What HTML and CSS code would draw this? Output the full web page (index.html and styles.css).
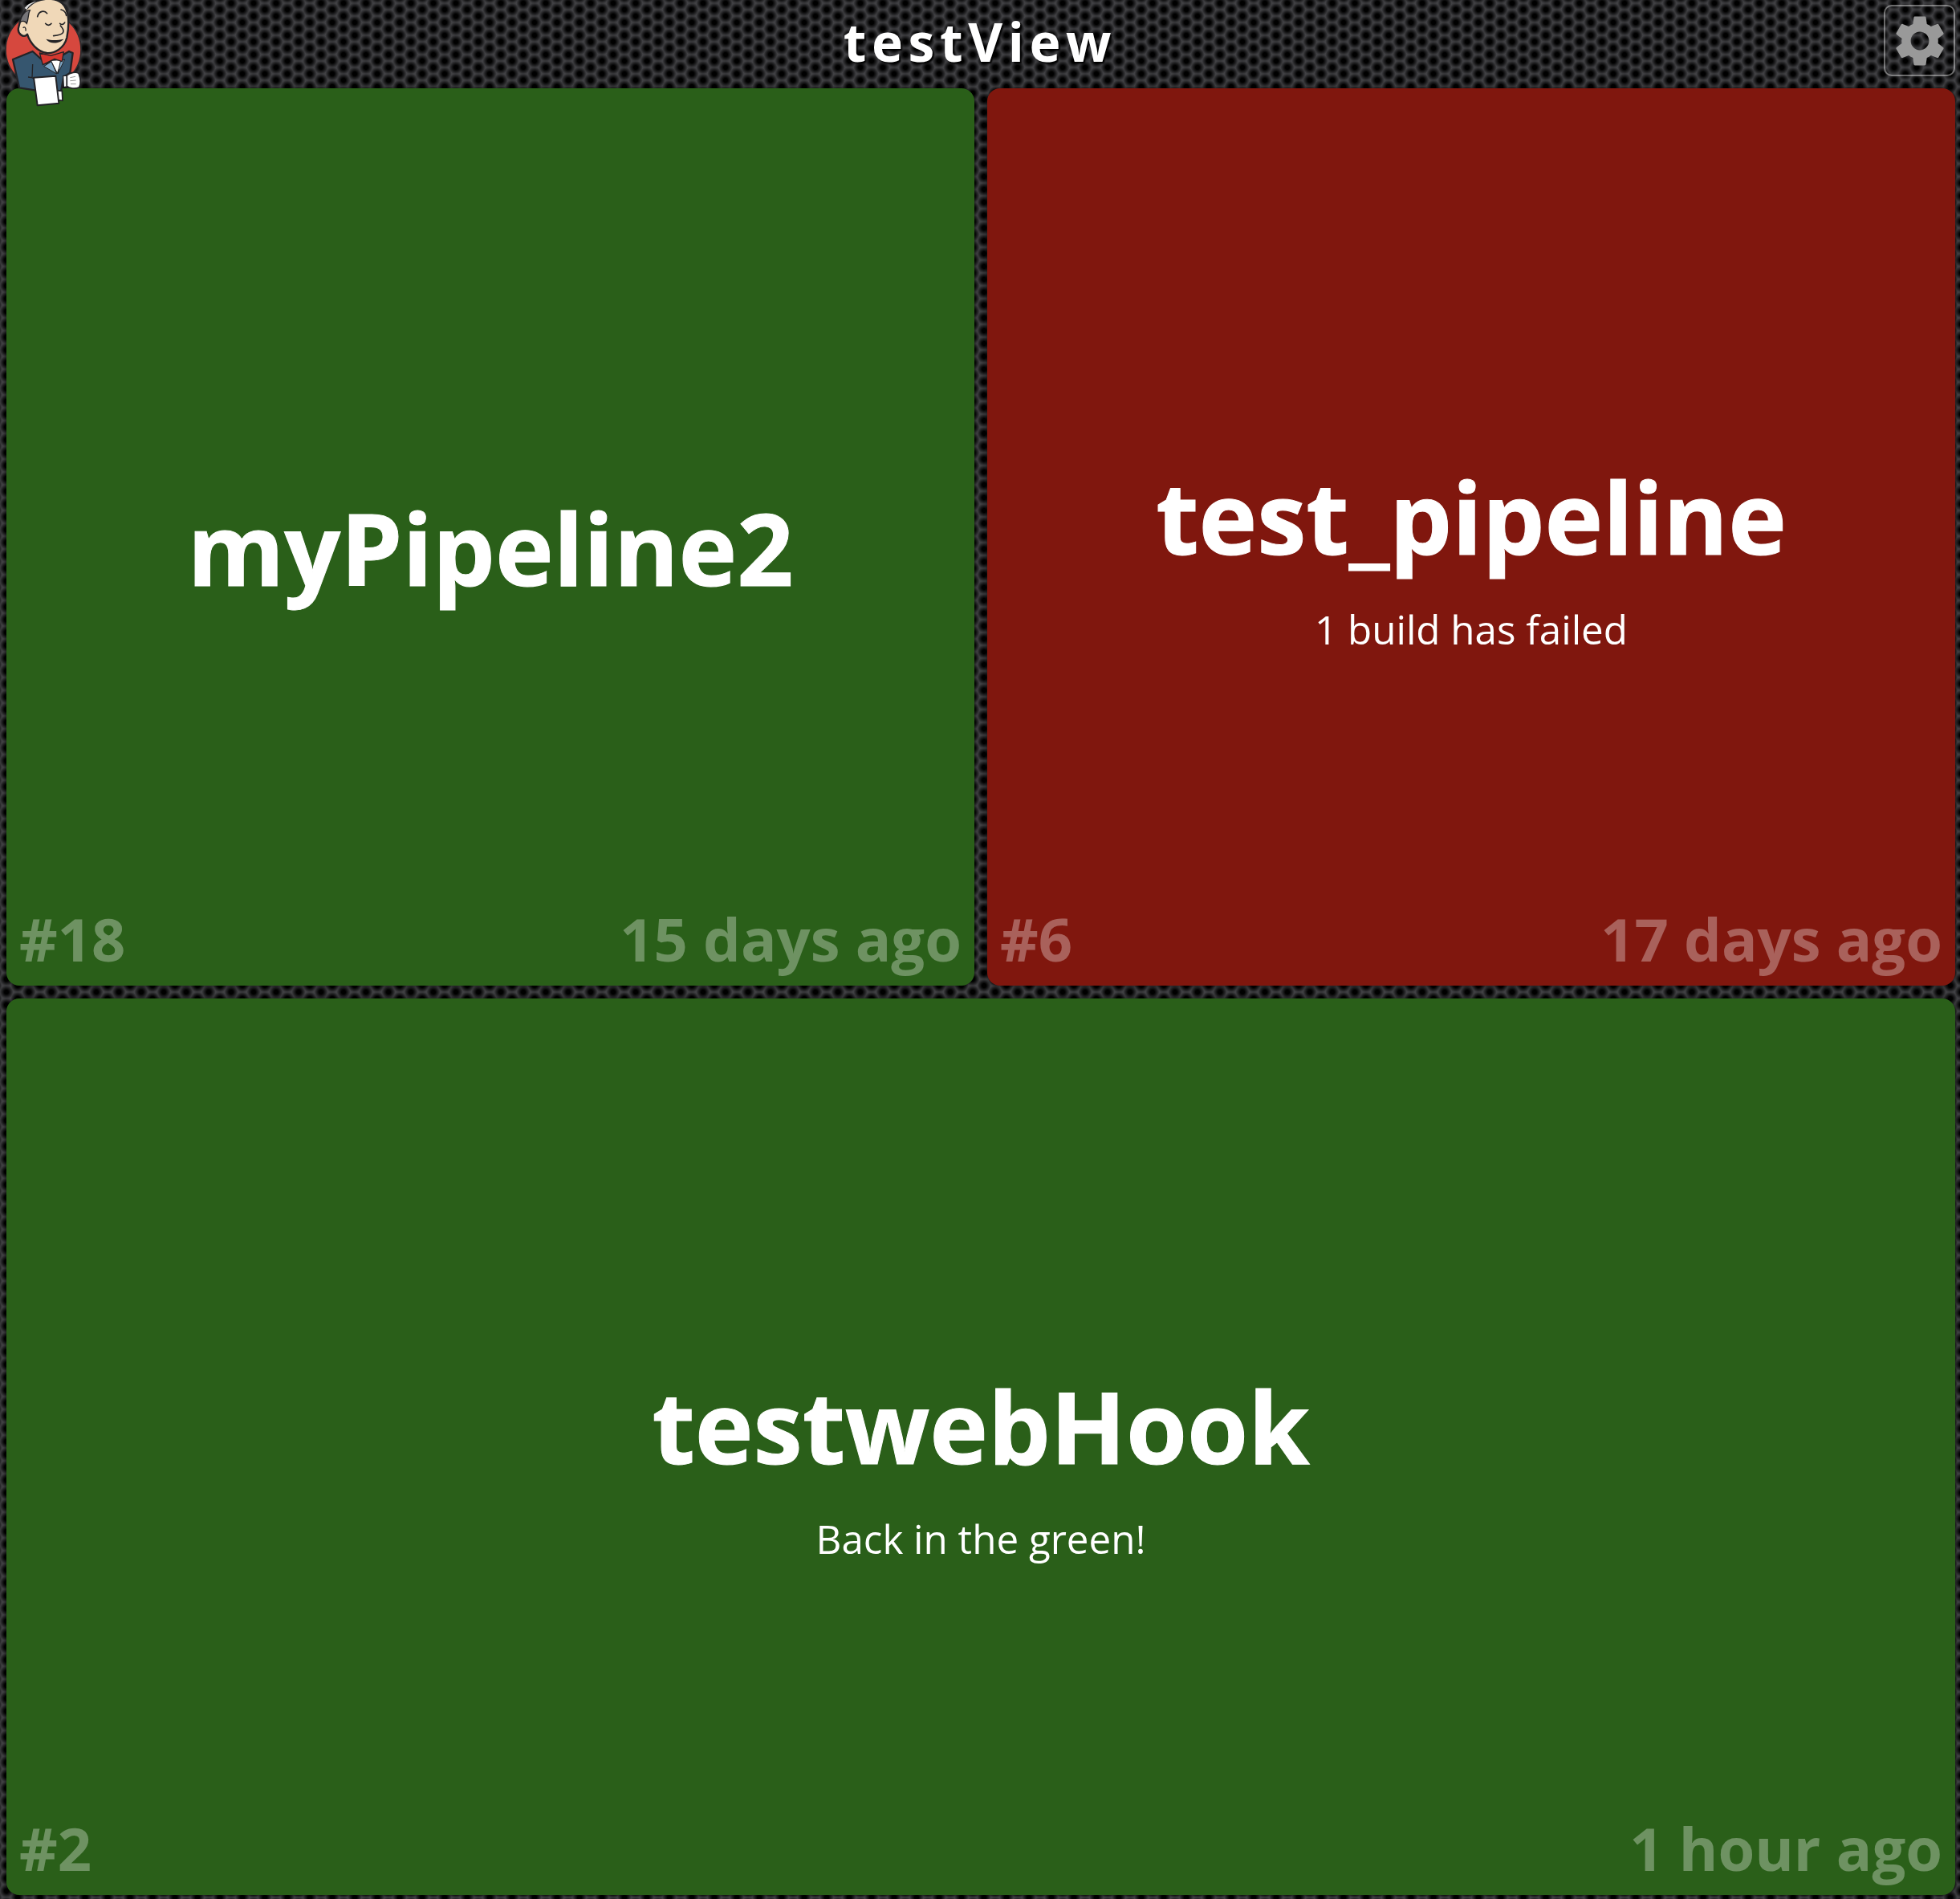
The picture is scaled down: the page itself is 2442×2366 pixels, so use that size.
FILE: index.html
```html
<!DOCTYPE html>
<html lang="en">
<head>
  <meta charset="UTF-8">
  <title>testView</title>
  <link rel="stylesheet" href="styles.css">
</head>
<body>
    <header class="topbar">
        <svg class="logo" viewBox="0 0 480 450" aria-hidden="true">
            <!-- red disc -->
            <circle cx="162" cy="186" r="141" fill="#d6483e" stroke="#2b2b2d" stroke-width="5"/>
            <!-- jacket -->
            <path d="M48 222 L122 192 L175 240 L258 192 L272 198 L262 272 L238 288 L226 352 L72 328 Z" fill="#36566f" stroke="#232326" stroke-width="7" stroke-linejoin="round"/>
            <path d="M122 240 L120 290 L105 288 M120 290 L128 296" fill="none" stroke="#232326" stroke-width="4"/>
            <!-- head -->
            <path d="M70 100 C76 70 88 40 110 22 C140 -6 200 -14 232 12 C262 38 258 100 250 140 C240 180 205 200 175 198 C140 194 112 160 102 128 C88 146 62 124 70 100 Z" fill="#f0d8b8" stroke="#232326" stroke-width="7" stroke-linejoin="round"/>
            <!-- hair -->
            <path d="M76 82 C78 58 96 38 112 38 C104 52 108 68 100 88 C94 78 84 78 76 82 Z" fill="#77767a" stroke="#232326" stroke-width="4"/>
            <path d="M92 30 C104 14 120 8 136 6 C118 14 106 22 100 36 Z" fill="#dcdcdc"/>
            <!-- face -->
            <path d="M140 62 C146 40 166 38 176 50" fill="none" stroke="#232326" stroke-width="5" stroke-linecap="round"/>
            <path d="M228 36 C238 38 246 46 248 58" fill="none" stroke="#232326" stroke-width="5" stroke-linecap="round"/>
            <path d="M170 88 C176 96 186 96 192 88" fill="none" stroke="#232326" stroke-width="5" stroke-linecap="round"/>
            <path d="M224 88 C230 94 238 92 242 84" fill="none" stroke="#232326" stroke-width="5" stroke-linecap="round"/>
            <path d="M226 96 C246 118 240 130 200 134" fill="none" stroke="#232326" stroke-width="5" stroke-linecap="round"/>
            <path d="M172 146 C190 170 226 160 238 146 C216 150 196 152 172 146 Z" fill="#232326"/>
            <path d="M86 104 C92 98 98 104 96 116" fill="none" stroke="#232326" stroke-width="4"/>
            <!-- shirt and lapels -->
            <path d="M190 226 L232 224 L214 274 Z" fill="#fff" stroke="#232326" stroke-width="3"/>
            <path d="M164 248 L192 230 L212 276 Z" fill="#7ea6c4" stroke="#232326" stroke-width="3"/>
            <path d="M226 228 L242 222 L216 276 Z" fill="#7ea6c4" stroke="#232326" stroke-width="3"/>
            <!-- bow tie -->
            <path d="M148 198 L190 208 L238 194 L232 230 L204 220 L160 242 Z" fill="#d6382f" stroke="#232326" stroke-width="4" stroke-linejoin="round"/>
            <!-- towel and glove -->
            <path d="M212 338 L232 340 L234 376 L214 374 Z" fill="#fff" stroke="#232326" stroke-width="5"/>
            <path d="M126 290 L208 284 L220 386 L140 394 Z" fill="#fff" stroke="#232326" stroke-width="6" stroke-linejoin="round"/>
            <path d="M236 284 L250 282 L250 324 L238 326 Z" fill="#fff" stroke="#232326" stroke-width="4"/>
            <path d="M250 282 C262 270 286 268 294 274 C302 296 302 316 296 326 C280 334 258 330 250 322 Z" fill="#fff" stroke="#232326" stroke-width="5" stroke-linejoin="round"/>
            <path d="M262 290 L282 286 M262 302 L284 300 M264 314 L284 314" fill="none" stroke="#9a9a9a" stroke-width="3"/>
        </svg>
        <h1 class="view-name">testView</h1>
        <a class="settings-btn" href="#" aria-label="Settings">
            <svg class="gear" viewBox="0 0 24 24" aria-hidden="true">
                <path d="M19.14 12.94c.04-.3.06-.61.06-.94 0-.32-.02-.64-.07-.94l2.03-1.58c.18-.14.23-.41.12-.61l-1.92-3.32c-.12-.22-.37-.29-.59-.22l-2.39.96c-.5-.38-1.03-.7-1.62-.94l-.36-2.54c-.04-.24-.24-.41-.48-.41h-3.84c-.24 0-.43.17-.47.41l-.36 2.54c-.59.24-1.13.57-1.62.94l-2.39-.96c-.22-.08-.47 0-.59.22L2.74 8.87c-.12.21-.08.47.12.61l2.03 1.58c-.05.3-.09.63-.09.94s.02.64.07.94l-2.03 1.58c-.18.14-.23.41-.12.61l1.92 3.32c.12.22.37.29.59.22l2.39-.96c.5.38 1.03.7 1.62.94l.36 2.54c.05.24.24.41.48.41h3.84c.24 0 .44-.17.47-.41l.36-2.54c.59-.24 1.13-.56 1.62-.94l2.39.96c.22.08.47 0 .59-.22l1.92-3.32c.12-.22.07-.47-.12-.61l-2.01-1.58zM12 15.6c-1.98 0-3.6-1.62-3.6-3.6s1.62-3.6 3.6-3.6 3.6 1.62 3.6 3.6-1.62 3.6-3.6 3.6z"/>
            </svg>
        </a>
    </header>

    <main class="jobs">
        <section class="job passing">
            <h2 class="job-name">myPipeline2</h2>
            <div class="job-footer"><span>#18</span><span>15 days ago</span></div>
        </section>
        <section class="job failing">
            <h2 class="job-name">test_pipeline</h2>
            <p class="job-note">1 build has failed</p>
            <div class="job-footer"><span>#6</span><span>17 days ago</span></div>
        </section>
        <section class="job passing wide">
            <h2 class="job-name">testwebHook</h2>
            <p class="job-note">Back in the green!</p>
            <div class="job-footer"><span>#2</span><span>1 hour ago</span></div>
        </section>
    </main>
</body>
</html>
```

FILE: styles.css
```css
/* General Styling */
html, body {
    height: 100%;
}

body {
    margin: 0;
    display: flex;
    flex-direction: column;
    font-family: 'Open Sans', sans-serif;
    color: #fff;
    background-color: #404043;
    background-image:
        radial-gradient(circle at center, #000 0, #000 2.5px, rgba(0, 0, 0, 0.6) 5px, rgba(0, 0, 0, 0) 8.5px),
        radial-gradient(circle at center, #000 0, #000 2.5px, rgba(0, 0, 0, 0.6) 5px, rgba(0, 0, 0, 0) 8.5px);
    background-size: 28px 16px;
    background-position: -6px -4px, 8px 4px;
}

/* Header */
.topbar {
    position: relative;
    height: 110px;
    flex-shrink: 0;
    text-align: center;
}

.view-name {
    margin: 0;
    font-size: 66px;
    line-height: 102px;
    font-weight: 700;
    letter-spacing: 6.6px;
    text-shadow: 2px 2px 2px #000;
}

.logo {
    position: absolute;
    left: 0;
    top: 0;
    width: 160px;
    height: 150px;
    z-index: 2;
}

.settings-btn {
    position: absolute;
    top: 6px;
    right: 6px;
    width: 85px;
    height: 85px;
    display: flex;
    align-items: center;
    justify-content: center;
    border: 2px solid rgba(255, 255, 255, 0.4);
    border-radius: 10px;
}

.gear {
    width: 76px;
    height: 76px;
    fill: #999;
}

/* Job grid */
.jobs {
    flex: 1;
    display: grid;
    grid-template-columns: 1fr 1fr;
    grid-template-rows: 1fr 1fr;
    gap: 16px;
    padding: 0 6px 5px 8px;
}

.job {
    position: relative;
    display: flex;
    flex-direction: column;
    justify-content: center;
    align-items: center;
    padding-top: 28px;
    border-radius: 16px;
    box-shadow: 0 0 4px rgba(0, 0, 0, 0.8);
}

.wide {
    grid-column: span 2;
}

.passing {
    background: #2a5f19;
}

.failing {
    background: #80170e;
}

.job-name {
    margin: 0;
    font-size: 123px;
    line-height: 190px;
    font-weight: 700;
    -webkit-text-stroke: 1px #fff;
}

.job-note {
    margin: 12px 0 0;
    font-size: 49.3px;
    line-height: 66px;
}

.job-footer {
    position: absolute;
    left: 16px;
    right: 16px;
    bottom: 8px;
    display: flex;
    justify-content: space-between;
    font-size: 74px;
    line-height: 100px;
    font-weight: 700;
    color: rgba(255, 255, 255, 0.32);
}
```
